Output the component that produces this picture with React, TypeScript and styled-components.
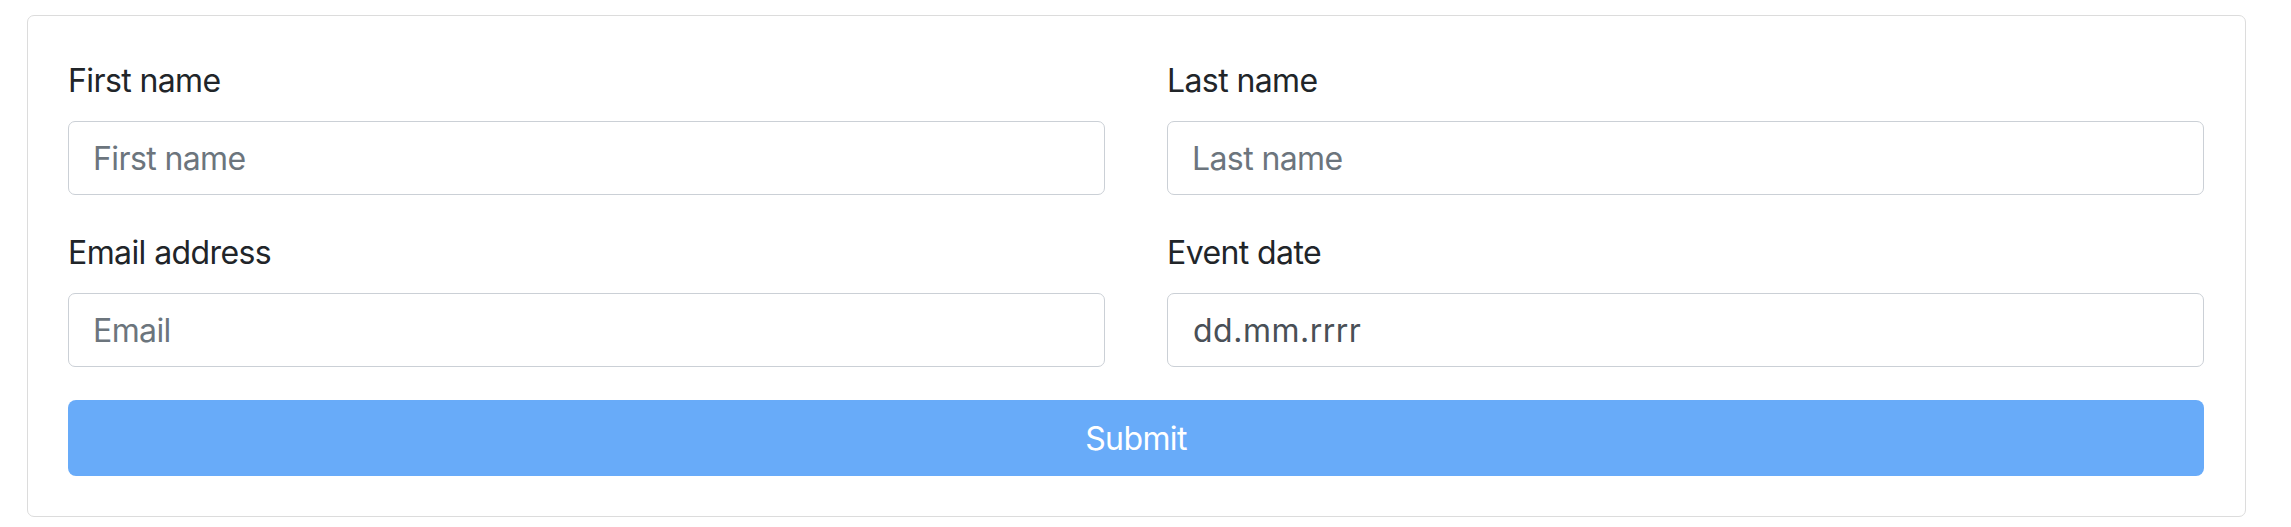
import React from "react";
import styled, { createGlobalStyle } from "styled-components";

const Global = createGlobalStyle`
  html, body { margin: 0; padding: 0; background: #ffffff; }
  body {
    font-family: Inter, "Noto Sans", "Liberation Sans", sans-serif;
    color: #212529;
  }
  * { box-sizing: border-box; }
`;

const Page = styled.div`
  padding: 15px 45px 10px 27px;
`;

const Card = styled.form`
  border: 1.5px solid #dcdcdc;
  border-radius: 7px;
  background: #fff;
  padding: 41px 41px 40px 40px;
  display: flex;
  flex-direction: column;
  gap: 33px;
`;

const Grid = styled.div`
  display: grid;
  grid-template-columns: 1fr 1fr;
  column-gap: 62px;
  row-gap: 34px;
`;

const Field = styled.div`
  display: flex;
  flex-direction: column;
  gap: 16px;
`;

const Label = styled.label`
  font-size: 32px;
  line-height: 48px;
  letter-spacing: -0.6px;
  color: #212529;
  font-weight: 400;
`;

const Input = styled.input<{ $date?: boolean }>`
  height: 74px;
  width: 100%;
  border: 1.5px solid #cbd0d6;
  border-radius: 7px;
  padding: 0 ${(p) => (p.$date ? "25px" : "24px")};
  font-family: inherit;
  font-size: 32px;
  letter-spacing: ${(p) => (p.$date ? "0.5px" : "-0.6px")};
  color: #495057;
  background: #fff;
  outline: none;
  &::placeholder { color: #6c757d; }
`;

const Button = styled.button`
  height: 76px;
  width: 100%;
  border: none;
  border-radius: 8px;
  background: #68abf9;
  color: #ffffff;
  font-family: inherit;
  font-size: 32px;
  letter-spacing: -0.6px;
`;

export default function App() {
  return (
    <Page>
      <Global />
      <Card onSubmit={(e) => e.preventDefault()}>
        <Grid>
          <Field>
            <Label>First name</Label>
            <Input placeholder="First name" />
          </Field>
          <Field>
            <Label>Last name</Label>
            <Input placeholder="Last name" />
          </Field>
          <Field>
            <Label>Email address</Label>
            <Input placeholder="Email" />
          </Field>
          <Field>
            <Label>Event date</Label>
            <Input $date defaultValue="dd.mm.rrrr" readOnly />
          </Field>
        </Grid>
        <Button type="submit">Submit</Button>
      </Card>
    </Page>
  );
}
